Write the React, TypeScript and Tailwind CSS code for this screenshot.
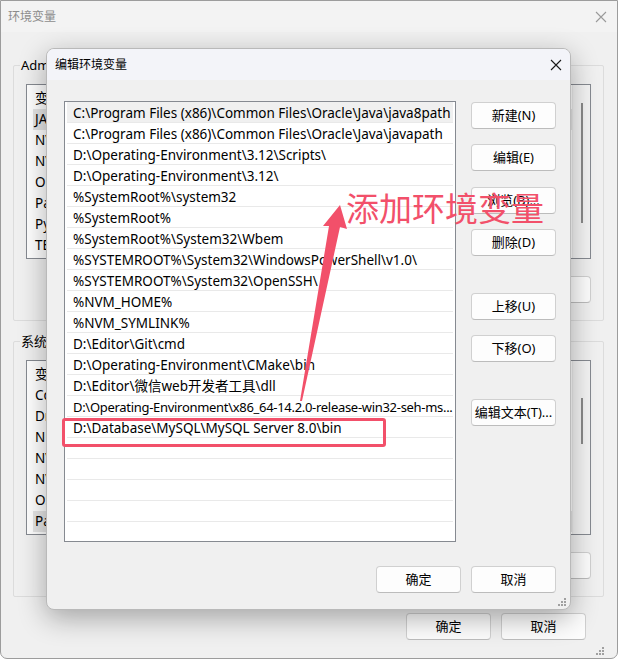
import React from "react";

const uiFont = { fontFamily: '"Noto Sans", "Noto Sans CJK SC", sans-serif' };

const pathRows = [
  "C:\\Program Files (x86)\\Common Files\\Oracle\\Java\\java8path",
  "C:\\Program Files (x86)\\Common Files\\Oracle\\Java\\javapath",
  "D:\\Operating-Environment\\3.12\\Scripts\\",
  "D:\\Operating-Environment\\3.12\\",
  "%SystemRoot%\\system32",
  "%SystemRoot%",
  "%SystemRoot%\\System32\\Wbem",
  "%SYSTEMROOT%\\System32\\WindowsPowerShell\\v1.0\\",
  "%SYSTEMROOT%\\System32\\OpenSSH\\",
  "%NVM_HOME%",
  "%NVM_SYMLINK%",
  "D:\\Editor\\Git\\cmd",
  "D:\\Operating-Environment\\CMake\\bin",
  "D:\\Editor\\微信web开发者工具\\dll",
  "D:\\Operating-Environment\\x86_64-14.2.0-release-win32-seh-ms...",
  "D:\\Database\\MySQL\\MySQL Server 8.0\\bin",
  "",
  "",
  "",
  "",
  "",
];

const userVars = ["变量", "JAVA_HOME", "NVM_HOME", "NVM_SYMLINK", "OneDrive", "Path", "PyCharm Community Edition", "TEMP"];
const sysVars = ["变量", "ComSpec", "DriverData", "NUMBER_OF_PROCESSORS", "NVM_HOME", "NVM_SYMLINK", "OS", "Path"];

const CloseX = ({ color }: { color: string }) => (
  <svg width="12" height="12" viewBox="0 0 12 12">
    <path d="M1 1 L11 11 M11 1 L1 11" stroke={color} strokeWidth="1.1" />
  </svg>
);

const Grip = () => (
  <svg width="8" height="8" viewBox="0 0 8 8">
    {[
      [6, 0],
      [6, 3],
      [3, 3],
      [6, 6],
      [3, 6],
      [0, 6],
    ].map(([x, y], i) => (
      <rect key={i} x={x} y={y} width="2" height="2" fill="#a0a0a0" />
    ))}
  </svg>
);

const WinButton = ({ label, className = "" }: { label: string; className?: string }) => (
  <div
    className={`h-[27px] w-[85px] shrink-0 flex items-center justify-center rounded-[4px] border border-[#d0d0d0] border-b-[#bcbcbc] bg-[#fdfdfd] text-[13px] text-black whitespace-nowrap ${className}`}
  >
    {label}
  </div>
);

const VarList = ({ items, active, thumbTop, thumbH }: { items: string[]; active: number; thumbTop: string; thumbH: string }) => (
  <div className="flex h-[175px] border border-[#868a91] bg-white">
    <div className="flex-1 pt-[3px] pl-[6px]">
      {items.map((v, i) => (
        <div
          key={i}
          className={`h-[21px] flex items-center pl-[2px] text-[13.5px] text-black ${i === active ? "bg-[#e5e5e5]" : ""}`}
        >
          {v}
        </div>
      ))}
    </div>
    <div className="w-[18px] bg-[#f4f4f4] border-l border-[#ececec] flex justify-center">
      <div className={`w-[2px] bg-[#8a8a8a] ${thumbTop} ${thumbH}`} />
    </div>
  </div>
);

const GroupBox = ({ legend, children }: { legend: string; children: React.ReactNode }) => (
  <div className="relative border border-[#dcdcdc] rounded-[2px] px-[12px] pt-[18px] pb-[17px]">
    <span className="absolute left-[6px] top-[-10px] bg-[#f0f0f0] px-[1px] text-[13px] text-black">{legend}</span>
    {children}
  </div>
);

export default function App() {
  return (
    <div className="relative w-[618px] h-[659px] overflow-hidden bg-white" style={uiFont}>
      {/* background window */}
      <div className="h-full w-full border border-[#9c9c9c] rounded-b-[7px] bg-[#f0f0f0] flex flex-col">
        <div className="h-[31px] flex items-center justify-between pl-[7px] pr-[10px] bg-[#f3f3f3]">
          <span className="text-[12px] text-[#8c8c8c]">环境变量</span>
          <CloseX color="#9a9a9a" />
        </div>
        <div className="flex-1 flex flex-col pl-[12px] pr-[13px] pt-[33px]">
          <GroupBox legend="Administrator 的用户变量(U)">
            <VarList items={userVars} active={1} thumbTop="mt-[18px]" thumbH="h-[120px]" />
            <div className="flex justify-end gap-[10px] mt-[17px]">
              <WinButton label="新建(N)..." />
              <WinButton label="编辑(E)..." />
              <WinButton label="删除(D)" />
            </div>
          </GroupBox>
          <div className="h-[20px]" />
          <GroupBox legend="系统变量(S)">
            <VarList items={sysVars} active={7} thumbTop="mt-[37px]" thumbH="h-[46px]" />
            <div className="flex justify-end gap-[10px] mt-[17px]">
              <WinButton label="新建(W)..." />
              <WinButton label="编辑(I)..." />
              <WinButton label="删除(L)" />
            </div>
          </GroupBox>
          <div className="flex justify-end gap-[10px] mt-[16px] pr-[18px]">
            <WinButton label="确定" />
            <WinButton label="取消" />
          </div>
          <div className="flex-1 flex items-end justify-end pb-[3px] pr-[0px]">
            <Grip />
          </div>
        </div>
      </div>

      {/* edit dialog */}
      <div className="absolute left-[46px] top-[48px] w-[525px] h-[562px] rounded-[8px] border border-[#b9b9b9] bg-[#f0f0f0] shadow-[0_8px_28px_rgba(0,0,0,0.32)] flex flex-col overflow-hidden">
        <div className="h-[31px] shrink-0 flex items-center justify-between pl-[8px] pr-[8px] bg-[#f3f4f9]">
          <span className="text-[12px] text-black">编辑环境变量</span>
          <CloseX color="#1a1a1a" />
        </div>
        <div className="flex-1 flex flex-col pl-[17px] pr-[14px] pt-[21px]">
          <div className="flex gap-[15px]">
            <div className="w-[392px] h-[441px] shrink-0 border border-[#868a91] bg-white px-[2px] overflow-hidden">
              {pathRows.map((r, i) => (
                <div
                  key={i}
                  className={`h-[21px] pt-[2px] border-b border-[#e9e9e9] pl-[6px] leading-[18px] text-black whitespace-nowrap overflow-hidden ${i === 0 ? "bg-[#f0f0f0]" : ""} ${i === 14 ? "text-[13px] tracking-[-0.3px]" : "text-[13.5px]"}`}
                >
                  {r}
                </div>
              ))}
            </div>
            <div className="flex flex-col">
              <WinButton label="新建(N)" className="mt-[1px]" />
              <WinButton label="编辑(E)" className="mt-[15px]" />
              <WinButton label="浏览(B)..." className="mt-[16px]" />
              <WinButton label="删除(D)" className="mt-[15px]" />
              <WinButton label="上移(U)" className="mt-[37px]" />
              <WinButton label="下移(O)" className="mt-[15px]" />
              <WinButton label="编辑文本(T)..." className="mt-[37px]" />
            </div>
          </div>
          <div className="flex justify-end gap-[10px] mt-[24px]">
            <WinButton label="确定" />
            <WinButton label="取消" />
          </div>
          <div className="flex-1 flex items-end justify-end pb-[3px] mr-[-10px]">
            <Grip />
          </div>
        </div>
      </div>

      {/* red annotation */}
      <div className="absolute left-[62px] top-[418px] w-[324px] h-[29px] rounded-[3px] border-[3px] border-[#f2506a]" />
      <svg className="absolute left-0 top-0 pointer-events-none" width="618" height="659">
        <polygon
          points="340,205 347,229 340,227 302,401 300,401 329,226 323,226"
          fill="#f2506a"
        />
      </svg>
      <div
        className="absolute left-[346px] top-[186px] text-[33px] leading-[42px] text-[#f2506a]"
        style={{ fontFamily: '"Noto Sans CJK SC", sans-serif' }}
      >
        添加环境变量
      </div>
    </div>
  );
}
